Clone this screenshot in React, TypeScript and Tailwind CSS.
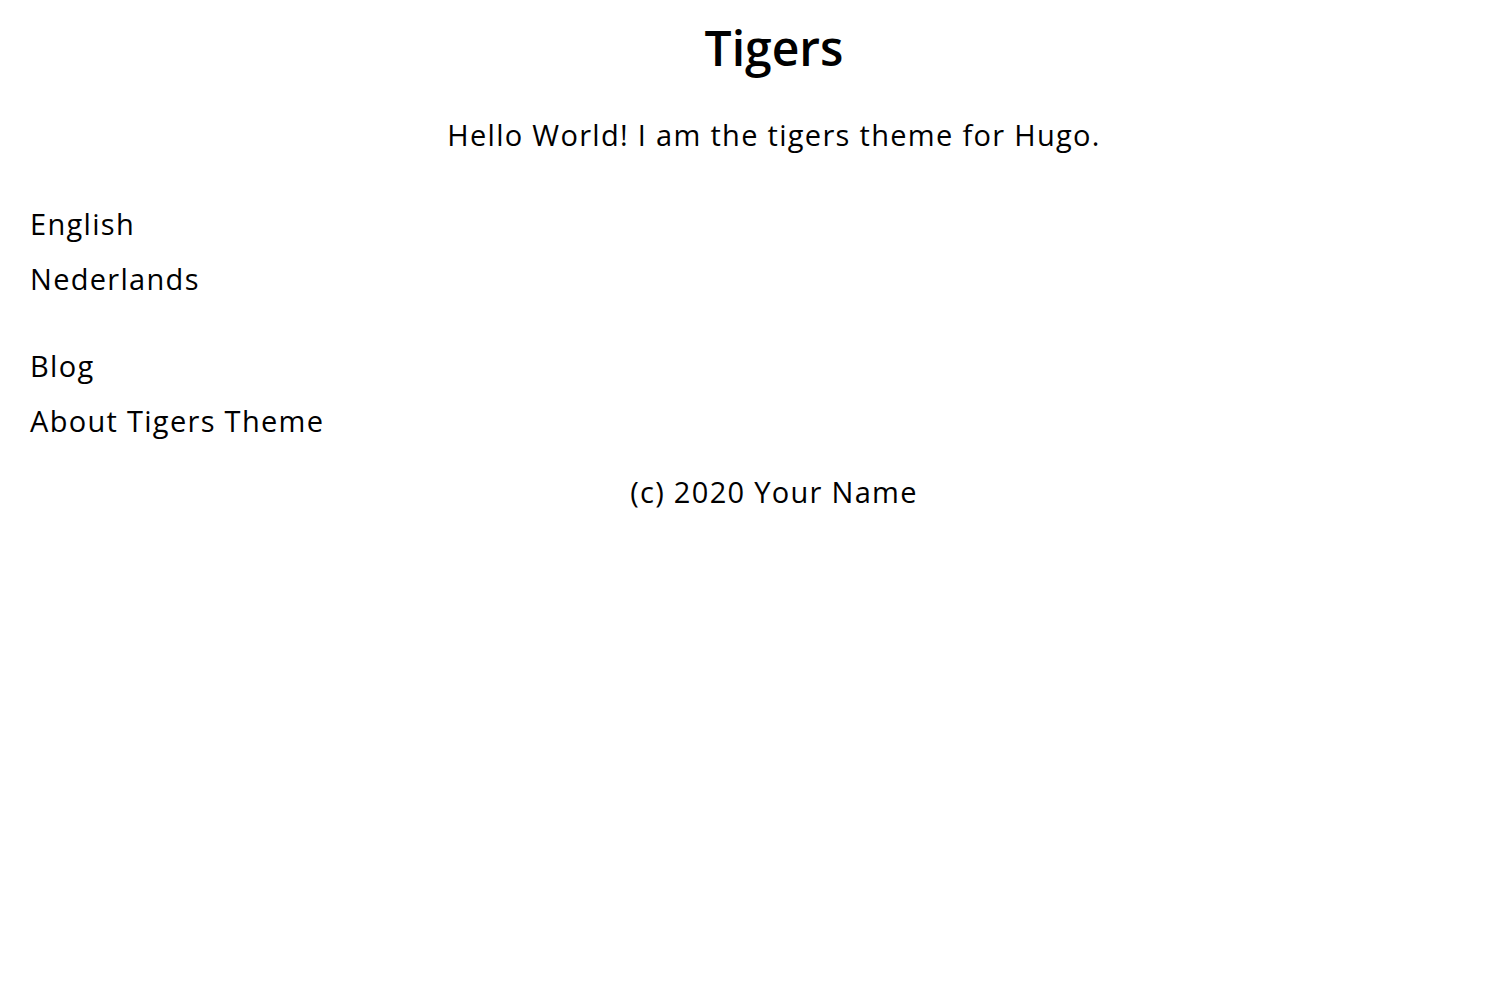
export default function App() {
  const languages = ['English', 'Nederlands'];
  const menu = ['Blog', 'About Tigers Theme'];

  return (
    <div className="min-h-screen bg-white text-black font-['Open_Sans',sans-serif] text-[29px] leading-[55px] tracking-[1.3px]">
      <header className="pt-[18px] pl-[48px] text-center">
        <h1 className="text-[48px] leading-[60px] font-semibold tracking-normal">Tigers</h1>
        <p className="mt-[29px]">Hello World! I am the tigers theme for Hugo.</p>
      </header>

      <nav className="mt-[34px] px-[30px]">
        <ul>
          {languages.map(l => (
            <li key={l}><a href="#">{l}</a></li>
          ))}
        </ul>
        <ul className="mt-[32px]">
          {menu.map(m => (
            <li key={m}><a href="#">{m}</a></li>
          ))}
        </ul>
      </nav>

      <footer className="mt-[16px] pl-[48px] text-center">(c) 2020 Your Name</footer>
    </div>
  );
}
